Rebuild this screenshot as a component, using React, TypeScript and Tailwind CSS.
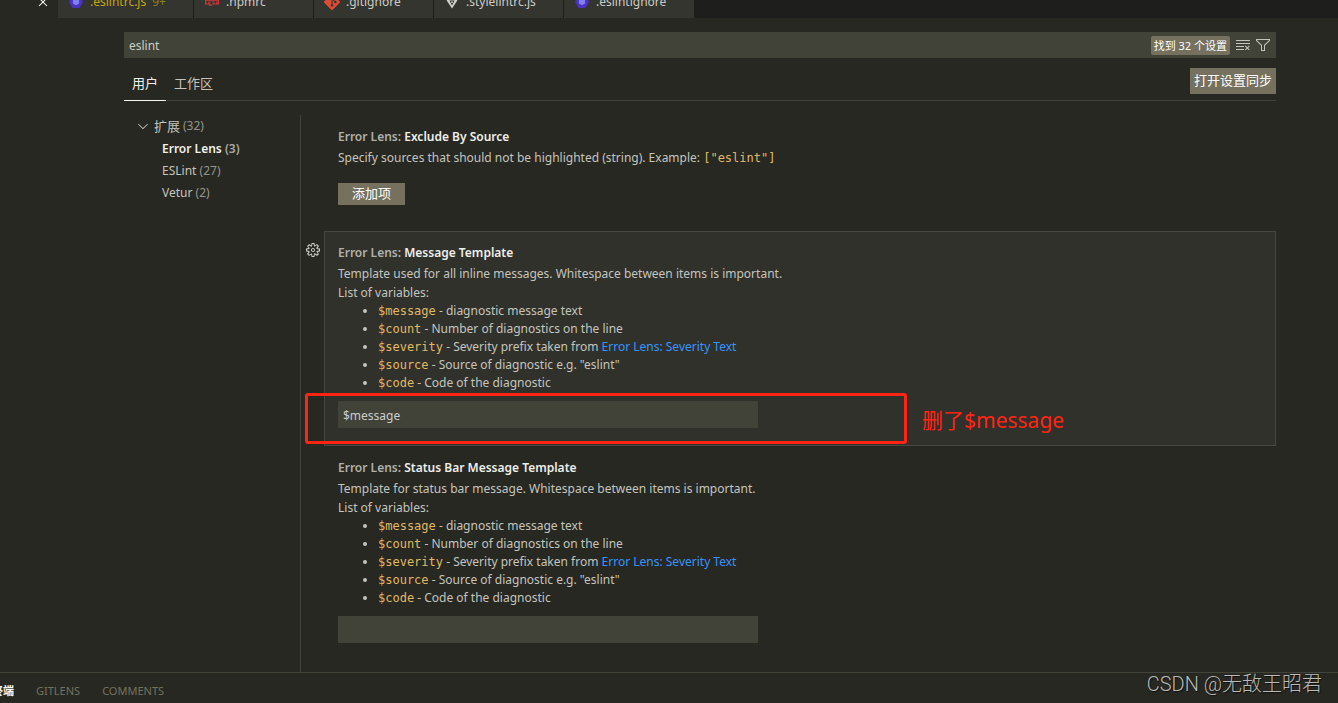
import type { ReactNode } from "react";
import {
  VscChevronDown,
  VscClearAll,
  VscClose,
  VscFilter,
  VscGear,
} from "react-icons/vsc";
import { SiGit } from "react-icons/si";

function EslintIcon() {
  return (
    <svg viewBox="0 0 16 16" className="size-4 shrink-0" aria-hidden="true">
      <path d="M4.6 1.5h6.8L15 7.7l-3.6 6.3H4.6L1 7.7z" fill="#4b32c3" />
      <path
        d="M8 4.2l3.1 1.8v3.5L8 11.3 4.9 9.5V6z"
        fill="#8080f2"
      />
    </svg>
  );
}

function NpmIcon() {
  return (
    <svg viewBox="0 0 16 16" className="size-4 shrink-0" aria-hidden="true">
      <path
        d="M1 5.5h14v5H8v1.2H5v-1.2H1zM2.3 6.7v2.7H4V7.5h.8v1.9h.8V6.7zM6.3 6.7v3.9H8V9.4h1.5V6.7zm1.6.8h.8v1.1h-.8zM10.3 6.7v2.7H12V7.5h.8v1.9h.6V7.5h.7V6.7z"
        fill="#cb3837"
        fillRule="evenodd"
      />
    </svg>
  );
}

function StylelintIcon() {
  return (
    <svg viewBox="0 0 16 16" className="size-4 shrink-0" aria-hidden="true">
      <path d="M2 3h3l3 3 3-3h3l-1 4-5 7.5L3 7z" fill="#d0d0d0" />
      <path d="M5.5 6.5h5L8 11.5z" fill="#33342d" />
      <circle cx="8" cy="8.2" r="0.9" fill="#d0d0d0" />
    </svg>
  );
}

function FileTab({
  icon,
  name,
  badge,
  className,
}: {
  icon: ReactNode;
  name: string;
  badge?: string;
  className: string;
}) {
  return (
    <button
      type="button"
      className={`flex h-[35px] shrink-0 items-center gap-1.5 border-[#1e1f1c] bg-[#34352f] pt-0.5 pl-2.5 text-left whitespace-nowrap ${className}`}
    >
      {icon}
      <span>{name}</span>
      {badge && <span className="text-[#8f7f14]">{badge}</span>}
    </button>
  );
}

function Heading({ children }: { children: ReactNode }) {
  return (
    <h3 className="leading-[22px] font-semibold text-[#b0b0ab]">
      Error Lens: <span className="text-[#eeeeea]">{children}</span>
    </h3>
  );
}

function Code({ children }: { children: ReactNode }) {
  return (
    <code className="font-['DejaVu_Sans_Mono',monospace] text-xs leading-none text-[#e0b865]">
      {children}
    </code>
  );
}

function TemplateDetails({ summary }: { summary: string }) {
  return (
    <>
      <p className="leading-[19px]">{summary}</p>
      <p className="leading-[19px]">List of variables:</p>
      <ul className="list-disc pl-10 leading-[18px]">
        <li>
          <Code>$message</Code> - diagnostic message text
        </li>
        <li>
          <Code>$count</Code> - Number of diagnostics on the line
        </li>
        <li>
          <Code>$severity</Code> - Severity prefix taken from{" "}
          <a href="#severity-text" className="text-[#3794ff]">
            Error Lens: Severity Text
          </a>
        </li>
        <li>
          <Code>$source</Code> - Source of diagnostic e.g. "eslint"
        </li>
        <li>
          <Code>$code</Code> - Code of the diagnostic
        </li>
      </ul>
    </>
  );
}

function TemplateInput({ label, value }: { label: string; value: string }) {
  return (
    <input
      type="text"
      aria-label={label}
      defaultValue={value}
      className="mt-[9px] block h-[27px] w-full max-w-[420px] bg-[#414339] px-[5px] pt-0.5 text-[#cccccc] outline-none"
    />
  );
}

const groups = [
  { name: "Error Lens", count: 3, active: true },
  { name: "ESLint", count: 27, active: false },
  { name: "Vetur", count: 2, active: false },
];

export default function App() {
  return (
    <div className="flex min-h-screen flex-col overflow-hidden bg-[#272822] font-['Noto_Sans','Noto_Sans_CJK_SC',sans-serif] text-xs text-[#c4c4bf]">
      <header className="flex h-[18px] items-end overflow-hidden bg-[#1e1f1c] text-[#ccccc7]">
        <div className="flex h-[35px] w-[58px] shrink-0 items-center justify-end bg-[#272822] pt-0.5 pr-[7px]">
          <button type="button" aria-label="Close" className="text-white">
            <VscClose className="size-4" />
          </button>
        </div>
        <FileTab
          icon={<EslintIcon />}
          name=".eslintrc.js"
          badge="9+"
          className="w-[136px] border-r text-[#c5a60c]"
        />
        <FileTab
          icon={<NpmIcon />}
          name=".npmrc"
          className="w-[120px] border-r"
        />
        <FileTab
          icon={<SiGit className="size-4 shrink-0 text-[#dd4c35]" />}
          name=".gitignore"
          className="w-[120px] border-r"
        />
        <FileTab
          icon={<StylelintIcon />}
          name=".stylelintrc.js"
          className="w-[130px] border-r"
        />
        <FileTab
          icon={<EslintIcon />}
          name=".eslintignore"
          className="w-[130px]"
        />
      </header>

      <main className="flex flex-1 flex-col pt-3.5 pr-[62px] pl-[124px]">
        <div className="flex h-[26px] items-center bg-[#414339] pr-[5px]">
          <input
            type="text"
            aria-label="Search settings"
            defaultValue="eslint"
            className="h-full min-w-0 flex-1 bg-transparent px-[5px] text-[#ccccc7] outline-none"
          />
          <span className="mr-[5px] flex h-[19px] items-center rounded-xs bg-[#75715e] px-[3px] pt-0.5 text-[11px] text-white">
            找到 32 个设置
          </span>
          <button type="button" aria-label="Clear search" className="mr-1">
            <VscClearAll className="size-4" />
          </button>
          <button type="button" aria-label="Filter">
            <VscFilter className="size-4" />
          </button>
        </div>

        <div className="mt-2 flex h-[35px] items-start justify-between border-b border-[#414339] text-[13px]">
          <nav className="flex h-[35px]">
            <button
              type="button"
              className="border-b border-[#f8f8f2] px-2 pt-px text-[#f0f0ea]"
            >
              用户
            </button>
            <button type="button" className="px-2">
              工作区
            </button>
          </nav>
          <button
            type="button"
            className="mt-0.5 h-[26px] bg-[#75715e] px-1 text-white"
          >
            打开设置同步
          </button>
        </div>

        <div className="flex flex-1 pt-3.5">
          <aside className="w-44 shrink-0 leading-[22px]">
            <button type="button" className="flex items-center pl-[11px]">
              <VscChevronDown className="mr-[3px] size-4" />
              <span className="text-[13px] leading-[22px]">扩展</span>
              <span className="ml-[3px] text-[#94948e]">(32)</span>
            </button>
            <ul className="pt-px pl-[38px]">
              {groups.map((group) => (
                <li key={group.name}>
                  <button
                    type="button"
                    className={
                      group.active ? "font-semibold text-[#f0f0ea]" : ""
                    }
                  >
                    {group.name}{" "}
                    <span
                      className={
                        group.active ? "text-[#a8a8a3]" : "text-[#94948e]"
                      }
                    >
                      ({group.count})
                    </span>
                  </button>
                </li>
              ))}
            </ul>
          </aside>

          <section className="min-w-0 flex-1 border-l border-[#414339] pl-[23px]">
            <article className="border border-transparent px-[13px] pt-2.5 pb-[25px]">
              <Heading>Exclude By Source</Heading>
              <p className="leading-[19px]">
                Specify sources that should not be highlighted (string).
                Example: <Code>["eslint"]</Code>
              </p>
              <button
                type="button"
                className="mt-4 flex h-[22px] items-center bg-[#75715e] px-3.5 text-[13px] text-white"
              >
                添加项
              </button>
            </article>

            <article className="relative border border-[#474842] bg-[#30312b] px-[13px] pt-2.5 pb-[17px]">
              <button
                type="button"
                aria-label="More actions"
                className="absolute top-2.5 -left-5 text-[#ccccc7]"
              >
                <VscGear className="size-4" />
              </button>
              <Heading>Message Template</Heading>
              <TemplateDetails summary="Template used for all inline messages. Whitespace between items is important." />
              <TemplateInput label="Message Template" value="$message" />
              <div className="pointer-events-none absolute bottom-px -left-5 h-[51px] w-[602px] rounded-[3px] border-[3px] border-[#ff2414]" />
              <p className="absolute bottom-[9px] left-[597px] text-[21px] leading-8 whitespace-nowrap text-[#ff2414]">
                删了$message
              </p>
            </article>

            <article className="border border-transparent px-[13px] pt-2.5 pb-[17px]">
              <Heading>Status Bar Message Template</Heading>
              <TemplateDetails summary="Template for status bar message. Whitespace between items is important." />
              <TemplateInput label="Status Bar Message Template" value="" />
            </article>
          </section>
        </div>
      </main>

      <footer className="relative flex h-[31px] shrink-0 items-center gap-[22px] border-t border-[#414339] pt-1.5 text-[11px] text-[#75715e]">
        <button type="button" className="-ml-2 font-bold text-white">
          终端
        </button>
        <button type="button">GITLENS</button>
        <button type="button">COMMENTS</button>
        <p className="absolute right-4 bottom-[3px] font-['Roboto','Noto_Sans_CJK_SC',sans-serif] text-xl leading-8 font-light text-[#b9b9b6] [text-shadow:1px_1px_1px_#111]">
          CSDN @无敌王昭君
        </p>
      </footer>
    </div>
  );
}
